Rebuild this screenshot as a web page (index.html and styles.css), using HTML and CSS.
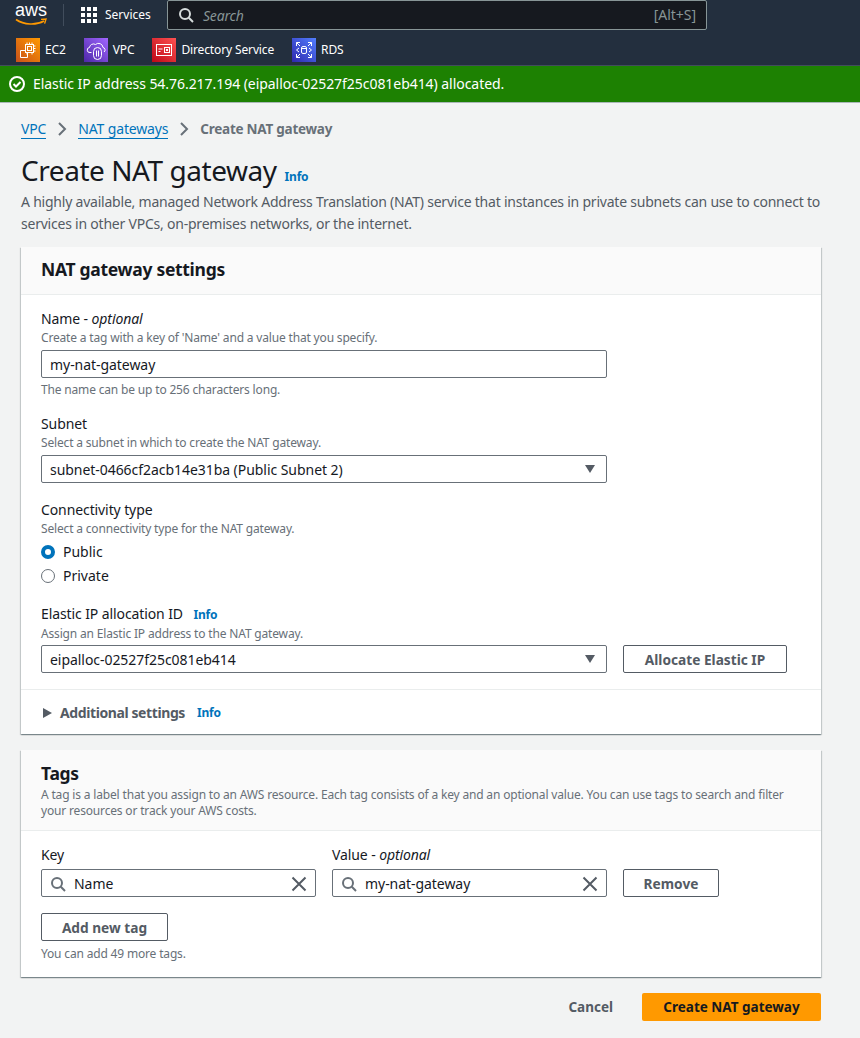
FILE: index.html
```html
<!DOCTYPE html>
<html lang="en">
<head>
  <meta charset="UTF-8">
  <title>Create NAT gateway</title>
  <link rel="stylesheet" href="styles.css">
</head>
<body>
  <header class="topnav">
    <div class="topnav-main">
      <a class="aws-logo">
        <span class="aws-word">aws</span>
        <svg class="aws-smile" width="32" height="8" viewBox="0 0 32 8"><path d="M1 1.500C9 7 21 7.500 29 3" fill="none" stroke="#f90" stroke-width="1.600"/><path d="M26 1.400L31 1L29.600 5.600" fill="none" stroke="#f90" stroke-width="1.400"/></svg>
      </a>
      <span class="nav-sep"></span>
      <a class="services">
        <svg width="16" height="16" viewBox="0 0 16 16" fill="#fff"><rect width="4" height="4"/><rect x="6" width="4" height="4"/><rect x="12" width="4" height="4"/><rect y="6" width="4" height="4"/><rect x="6" y="6" width="4" height="4"/><rect x="12" y="6" width="4" height="4"/><rect y="12" width="4" height="4"/><rect x="6" y="12" width="4" height="4"/><rect x="12" y="12" width="4" height="4"/></svg>
        <span>Services</span>
      </a>
      <div class="nav-search">
        <svg width="16" height="16" viewBox="0 0 16 16" fill="none" stroke="#d5dbdb" stroke-width="2"><circle cx="7" cy="7" r="5"/><path d="M10.800 10.800L15 15"/></svg>
        <span class="search-hint">Search</span>
        <span class="search-key">[Alt+S]</span>
      </div>
    </div>
    <div class="topnav-shortcuts">
      <a class="shortcut">
        <svg class="svc-icon" width="24" height="24" viewBox="0 0 24 24">
          <defs><linearGradient id="g-ec2" x1="0" y1="1" x2="1" y2="0"><stop offset="0" stop-color="#c8511b"/><stop offset="1" stop-color="#f90"/></linearGradient></defs>
          <rect width="24" height="24" fill="url(#g-ec2)"/>
          <g fill="none" stroke="#fff"><rect x="9.500" y="6.500" width="8" height="8"/><rect x="11.500" y="8.500" width="4" height="4"/><path d="M4.500 12.500h5M4.500 12.500v7h7v-5M11 4.500v2M13.500 4.500v2M16 4.500v2M11 14.500v2M16 14.500v2M17.500 8h2M17.500 10.500h2M17.500 13h2"/></g>
        </svg>
        <span>EC2</span>
      </a>
      <a class="shortcut">
        <svg class="svc-icon" width="24" height="24" viewBox="0 0 24 24">
          <defs><linearGradient id="g-vpc" x1="0" y1="1" x2="1" y2="0"><stop offset="0" stop-color="#4d27a8"/><stop offset="1" stop-color="#a166ff"/></linearGradient></defs>
          <rect width="24" height="24" fill="url(#g-vpc)"/>
          <g fill="none" stroke="#fff"><path d="M7.500 14.500H6a2.500 2.500 0 0 1-.5-5 4 4 0 0 1 6-3 4.500 4.500 0 0 1 7.500 3 2.500 2.500 0 0 1 1 4.500"/><path d="M9.500 13.500a4 4 0 0 1 8 0v4a4 4 0 0 1-8 0z"/><path d="M12.500 12.500v6M14.500 12.500v6"/></g>
        </svg>
        <span>VPC</span>
      </a>
      <a class="shortcut">
        <svg class="svc-icon" width="24" height="24" viewBox="0 0 24 24">
          <defs><linearGradient id="g-ds" x1="0" y1="1" x2="1" y2="0"><stop offset="0" stop-color="#bd0816"/><stop offset="1" stop-color="#ff5252"/></linearGradient></defs>
          <rect width="24" height="24" fill="url(#g-ds)"/>
          <g fill="none" stroke="#fff"><rect x="4.500" y="6.500" width="15" height="11"/><rect x="12.500" y="9.500" width="5" height="5"/><path d="M6.500 11h4M6.500 13.500h2"/></g>
          <rect x="14" y="11" width="2" height="2" fill="#fff"/>
        </svg>
        <span>Directory Service</span>
      </a>
      <a class="shortcut">
        <svg class="svc-icon" width="24" height="24" viewBox="0 0 24 24">
          <defs><linearGradient id="g-rds" x1="0" y1="1" x2="1" y2="0"><stop offset="0" stop-color="#2e27ad"/><stop offset="1" stop-color="#527fff"/></linearGradient></defs>
          <rect width="24" height="24" fill="url(#g-rds)"/>
          <g fill="none" stroke="#fff"><path d="M4.500 8V4.500H8M16 4.500h3.500V8M4.500 16v3.500H8M16 19.500h3.500V16M4.500 4.500L8 8M19.500 4.500L16 8M4.500 19.500L8 16M19.500 19.500L16 16"/><rect x="9.500" y="8.500" width="5" height="7" rx="1.500"/><path d="M9.500 10.500h5M7 10l-2.500 2L7 14M17 10l2.500 2L17 14"/></g>
        </svg>
        <span>RDS</span>
      </a>
    </div>
  </header>

  <div class="flash">
    <svg width="16" height="16" viewBox="0 0 16 16" fill="none" stroke="#fff" stroke-width="2"><circle cx="8" cy="8" r="7"/><path d="M4.500 8L7 10.500L11.500 6"/></svg>
    <span>Elastic IP address 54.76.217.194 (eipalloc-02527f25c081eb414) allocated.</span>
  </div>

  <main class="page">
    <nav class="crumbs">
      <a class="crumb-link">VPC</a>
      <svg class="crumb-sep" width="16" height="16" viewBox="0 0 16 16" fill="none" stroke="#687078" stroke-width="2"><path d="M5 2l6 6-6 6"/></svg>
      <a class="crumb-link">NAT gateways</a>
      <svg class="crumb-sep" width="16" height="16" viewBox="0 0 16 16" fill="none" stroke="#687078" stroke-width="2"><path d="M5 2l6 6-6 6"/></svg>
      <span class="crumb-current">Create NAT gateway</span>
    </nav>

    <div class="page-title">
      <h1>Create NAT gateway</h1>
      <a class="info">Info</a>
    </div>
    <p class="page-desc">A highly available, managed Network Address Translation (NAT) service that instances in private subnets can use to connect to services in other VPCs, on-premises networks, or the internet.</p>

    <section class="card">
      <div class="card-head">
        <h2>NAT gateway settings</h2>
      </div>
      <div class="card-body">
        <div class="field field-name">
          <label>Name - <i>optional</i></label>
          <p class="hint">Create a tag with a key of 'Name' and a value that you specify.</p>
          <div class="control">my-nat-gateway</div>
          <p class="hint hint-after">The name can be up to 256 characters long.</p>
        </div>
        <div class="field field-subnet">
          <label>Subnet</label>
          <p class="hint">Select a subnet in which to create the NAT gateway.</p>
          <div class="control select">
            <span>subnet-0466cf2acb14e31ba (Public Subnet 2)</span>
            <span class="caret"></span>
          </div>
        </div>
        <div class="field field-conn">
          <label>Connectivity type</label>
          <p class="hint">Select a connectivity type for the NAT gateway.</p>
          <div class="radio"><span class="radio-dot on"></span>Public</div>
          <div class="radio"><span class="radio-dot"></span>Private</div>
        </div>
        <div class="field">
          <label>Elastic IP allocation ID <a class="info info-label">Info</a></label>
          <p class="hint">Assign an Elastic IP address to the NAT gateway.</p>
          <div class="control-row">
            <div class="control select">
              <span>eipalloc-02527f25c081eb414</span>
              <span class="caret"></span>
            </div>
            <button class="btn btn-allocate">Allocate Elastic IP</button>
          </div>
        </div>
      </div>
      <div class="expander">
        <span class="expander-arrow"></span>
        <span class="expander-title">Additional settings</span>
        <a class="info">Info</a>
      </div>
    </section>

    <section class="card">
      <div class="card-head tags-head">
        <h2>Tags</h2>
        <p class="hint">A tag is a label that you assign to an AWS resource. Each tag consists of a key and an optional value. You can use tags to search and filter your resources or track your AWS costs.</p>
      </div>
      <div class="tags-body">
        <div class="tag-row">
          <div class="tag-col">
            <label>Key</label>
            <div class="control search">
              <svg width="16" height="16" viewBox="0 0 16 16" fill="none" stroke="#687078" stroke-width="2"><circle cx="7" cy="7" r="5"/><path d="M10.800 10.800L15 15"/></svg>
              <span>Name</span>
              <svg class="clear" width="16" height="16" viewBox="0 0 16 16" fill="none" stroke="#545b64" stroke-width="2"><path d="M1.500 1.500l13 13M14.500 1.500l-13 13"/></svg>
            </div>
          </div>
          <div class="tag-col">
            <label>Value - <i>optional</i></label>
            <div class="control search">
              <svg width="16" height="16" viewBox="0 0 16 16" fill="none" stroke="#687078" stroke-width="2"><circle cx="7" cy="7" r="5"/><path d="M10.800 10.800L15 15"/></svg>
              <span>my-nat-gateway</span>
              <svg class="clear" width="16" height="16" viewBox="0 0 16 16" fill="none" stroke="#545b64" stroke-width="2"><path d="M1.500 1.500l13 13M14.500 1.500l-13 13"/></svg>
            </div>
          </div>
          <button class="btn btn-remove">Remove</button>
        </div>
        <button class="btn btn-add">Add new tag</button>
        <p class="hint hint-after">You can add 49 more tags.</p>
      </div>
    </section>

    <div class="form-actions">
      <button class="btn-link">Cancel</button>
      <button class="btn-primary">Create NAT gateway</button>
    </div>
  </main>
</body>
</html>
```

FILE: styles.css
```css
/* base */
html, body { margin: 0; padding: 0; }
body {
  background: #f2f3f3;
  color: #16191f;
  font-family: "Noto Sans", "Open Sans", Arial, sans-serif;
  font-size: 14px;
  line-height: 22px;
  height: 1038px;
  overflow: hidden;
}
a { text-decoration: none; }
p, h1, h2 { margin: 0; }

/* top navigation */
.topnav { background: #232f3e; height: 65px; }
.topnav-main {
  display: flex;
  align-items: center;
  height: 30px;
  padding-left: 15px;
}
.aws-logo {
  position: relative;
  align-self: flex-start;
  width: 32px;
  height: 26px;
  display: block;
}
.aws-word {
  display: block;
  color: #fff;
  font-family: "Liberation Sans", Arial, sans-serif;
  font-size: 18px;
  line-height: 20px;
  text-align: center;
}
.aws-smile { position: absolute; left: 0; top: 18px; }
.nav-sep {
  width: 1px;
  height: 22px;
  background: #414d5c;
  margin: 0 17px 0 16px;
}
.services {
  display: flex;
  align-items: center;
  gap: 8px;
  color: #fff;
  font-size: 12px;
  width: 86px;
}
.nav-search {
  display: flex;
  align-items: center;
  box-sizing: border-box;
  width: 540px;
  height: 30px;
  padding: 0 10px;
  background: #16191f;
  border: 1px solid #879596;
  border-radius: 2px;
}
.search-hint {
  margin-left: 9px;
  padding-top: 2px;
  color: #879596;
  font-style: italic;
  font-size: 14px;
  letter-spacing: -.2px;
  flex: 1;
}
.search-key { color: #879596; font-size: 14px; letter-spacing: -.03px; }

.topnav-shortcuts {
  display: flex;
  align-items: center;
  gap: 18px;
  box-sizing: border-box;
  height: 35px;
  padding: 5px 0 0 16px;
}
.shortcut {
  display: flex;
  align-items: center;
  gap: 5px;
  color: #fff;
  font-size: 12px;
  letter-spacing: -.13px;
}

/* flash message */
.flash {
  display: flex;
  align-items: center;
  gap: 8px;
  box-sizing: border-box;
  height: 38px;
  padding-left: 9px;
  background: #1d8102;
  color: #fff;
  font-size: 14px;
  letter-spacing: -.05px;
  border-top: 1px solid #414d5c;
  border-bottom: 1px solid #aab7b8;
}

/* page */
.page { padding: 0 39px 0 21px; }
.crumbs {
  display: flex;
  align-items: center;
  gap: 8px;
  padding-top: 15px;
  height: 22px;
  font-size: 14px;
}
.crumb-link {
  color: #0073bb;
  line-height: 18px;
  letter-spacing: -.15px;
  border-bottom: 1px solid #0073bb;
}
.crumb-current { color: #687078; font-weight: 700; font-size: 13.500px; letter-spacing: -.25px; }
.page-title {
  display: flex;
  align-items: baseline;
  gap: 8px;
  margin-top: 10px;
}
h1 { font-size: 28px; line-height: 40px; font-weight: 400; letter-spacing: -.45px; }
.info { color: #0073bb; font-size: 12px; font-weight: 700; letter-spacing: -.2px; }
.page-desc { color: #545b64; letter-spacing: -.22px; margin-top: 1px; width: 810px; }

/* containers */
.card {
  background: #fff;
  margin-top: 16px;
  box-shadow: 0 1px 1px 0 rgba(0,28,36,.3), 1px 1px 1px 0 rgba(0,28,36,.15), -1px 1px 1px 0 rgba(0,28,36,.15);
}
.page-desc + .card { margin-top: 12px; }
.card-head {
  background: #fafafa;
  border-bottom: 1px solid #eaeded;
  padding: 11px 20px 13px;
}
h2 { font-size: 17.500px; line-height: 23px; font-weight: 700; letter-spacing: -.3px; }
.card-body { padding: 14px 20px 16px; }

.field label, .tag-col label {
  display: block;
  font-size: 14px;
  line-height: 20px;
  letter-spacing: -.1px;
}
.field-name { margin-bottom: 16px; }
.field-name .control { margin-top: 4px; }
.field-subnet { margin-bottom: 17px; }
.field-subnet .control { margin-top: 4px; }
.field-conn { margin-bottom: 16px; }
.hint { color: #687078; font-size: 12px; line-height: 17px; letter-spacing: -.17px; }
.hint-after { margin-top: 3px; }
.control {
  box-sizing: border-box;
  display: flex;
  align-items: center;
  width: 566px;
  height: 28px;
  margin-top: 3px;
  padding: 2px 8px 0;
  background: #fff;
  border: 1px solid #687078;
  border-radius: 2px;
  font-size: 14px;
  letter-spacing: -.05px;
}
.select { justify-content: space-between; }
.caret {
  width: 0;
  height: 0;
  margin: 0 3px 2px 0;
  border-left: 5.500px solid transparent;
  border-right: 5.500px solid transparent;
  border-top: 8px solid #545b64;
}
.radio {
  display: flex;
  align-items: center;
  gap: 8px;
  height: 24px;
  font-size: 14px;
}
.radio:first-of-type { margin-top: 3px; }
.radio-dot {
  box-sizing: border-box;
  width: 14px;
  height: 14px;
  border: 1px solid #687078;
  border-radius: 50%;
}
.radio-dot.on { border: 4px solid #0073bb; }
.info-label { margin-left: 7px; }
.control-row { display: flex; gap: 16px; align-items: center; }

.btn {
  box-sizing: border-box;
  height: 28px;
  background: #fff;
  border: 1px solid #545b64;
  border-radius: 2px;
  color: #545b64;
  font-family: inherit;
  font-size: 13.700px;
  font-weight: 700;
  padding: 0;
}
.btn-allocate { width: 164px; margin-top: 3px; }

.expander {
  display: flex;
  align-items: center;
  gap: 8px;
  height: 43px;
  padding: 1px 0 0 22px;
  border-top: 1px solid #eaeded;
}
.expander-arrow {
  width: 0;
  height: 0;
  border-top: 5px solid transparent;
  border-bottom: 5px solid transparent;
  border-left: 9px solid #545b64;
}
.expander-title { color: #545b64; font-size: 14px; font-weight: 700; letter-spacing: -.4px; }
.expander .info { margin-left: 4px; }

/* tags */
.tags-head { padding: 12px 20px 11px; }
.tags-head .hint { width: 760px; line-height: 16px; margin-top: 2px; }
.tags-body { padding: 14px 20px 15px; }
.tag-row { display: flex; align-items: flex-end; gap: 16px; margin-bottom: 16px; }
.tag-col .control { width: 275px; margin-top: 4px; }
.tags-body .hint-after { margin-top: 4px; }
.search svg { flex: none; }
.search span { flex: 1; margin-left: 8px; }
.tag-row .btn-remove { width: 96px; }
.btn-add { width: 127px; }

/* form footer */
.form-actions {
  display: flex;
  justify-content: flex-end;
  align-items: center;
  gap: 29px;
  margin-top: 16px;
}
.btn-link {
  background: none;
  border: 0;
  padding: 0;
  color: #545b64;
  font-family: inherit;
  font-size: 13.500px;
  font-weight: 700;
}
.btn-primary {
  width: 179px;
  height: 28px;
  background: #f90;
  border: 0;
  border-radius: 2px;
  color: #16191f;
  font-family: inherit;
  font-size: 13.500px;
  font-weight: 700;
  padding: 0;
}
```
